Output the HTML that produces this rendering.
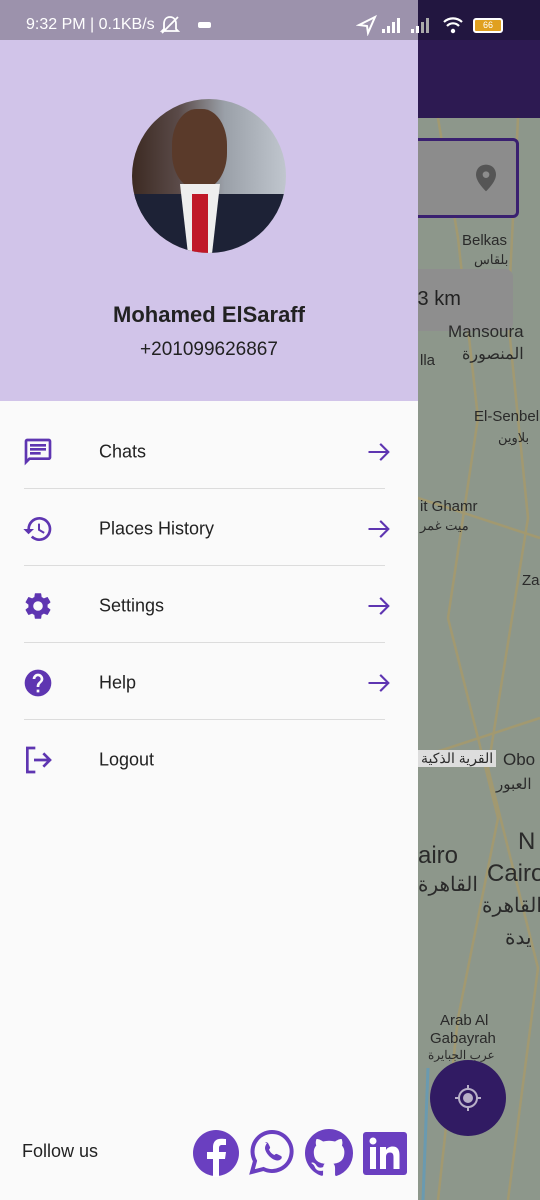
<!DOCTYPE html>
<html><head><meta charset="utf-8"><style>
*{margin:0;padding:0;box-sizing:border-box}
body{width:540px;height:1200px;position:relative;overflow:hidden;font-family:"Liberation Sans","Noto Sans CJK SC",sans-serif;background:#8d978b}
.abs{position:absolute}
.row{position:absolute;left:0;width:418px;height:77px}
.row .t{position:absolute;left:99px;top:50%;transform:translateY(-50%);font-size:18px;color:#222}
.row svg.i{position:absolute;left:22px;top:50%;transform:translateY(-50%)}
.row svg.a{position:absolute;left:365px;top:50%;transform:translateY(-50%)}
.div{position:absolute;left:24px;width:361px;height:1px;background:#dcdcdc}
.mt{position:absolute;color:#2a2a2a;font-size:15px;white-space:nowrap}
</style></head><body>
<div class="abs" style="left:418px;top:0;width:122px;height:118px;background:#2d1a52"></div>
<div class="abs" style="left:418px;top:0;width:122px;height:40px;background:#221640"></div>
<svg class="abs" style="left:418px;top:118px" width="122" height="1082">
<g fill="none" stroke="#a89a6a" stroke-width="2.5" opacity=".8">
<path d="M20 0 L40 120 L60 300 L30 500 L80 700 L40 900 L20 1082"/>
<path d="M100 0 L90 200 L110 400 L70 650 L120 850 L90 1082"/>
<path d="M0 380 L122 420"/><path d="M0 640 L122 600"/>
</g>
<path d="M10 950 L5 1082" stroke="#6a9ab0" stroke-width="3" fill="none"/>
</svg>
<div class="abs" style="left:400px;top:138px;width:119px;height:80px;border:3px solid #3a2070;border-radius:6px;background:#8c8c8c"></div>
<svg class="abs" style="left:476px;top:164px" width="20" height="28" viewBox="0 0 24 32"><path d="M12 0C5 0 0 5 0 12c0 9 12 20 12 20s12-11 12-20C24 5 19 0 12 0z" fill="#555"/><circle cx="12" cy="12" r="4" fill="#8c8c8c"/></svg>
<div class="abs" style="left:400px;top:269px;width:113px;height:62px;border-radius:8px;background:#8e8e8e"></div>
<div class="mt" style="left:412px;top:288px;font-size:20px;color:#222">.3 km</div>
<div class="mt" style="left:462px;top:232px">Belkas</div>
<div class="mt" style="left:474px;top:252px;font-size:13px">بلقاس</div>
<div class="mt" style="left:448px;top:322px;font-size:17px">Mansoura</div>
<div class="mt" style="left:462px;top:344px;font-size:16px">المنصورة</div>
<div class="mt" style="left:420px;top:352px">lla</div>
<div class="mt" style="left:474px;top:408px">El-Senbel</div>
<div class="mt" style="left:498px;top:430px;font-size:13px">بلاوين</div>
<div class="mt" style="left:420px;top:498px">it Ghamr</div>
<div class="mt" style="left:420px;top:518px;font-size:13px">ميت غمر</div>
<div class="mt" style="left:522px;top:572px">Za</div>
<div class="mt" style="left:418px;top:750px;background:#ddd;padding:0 3px;font-size:14px">القرية الذكية</div>
<div class="mt" style="left:503px;top:750px;font-size:17px">Obo</div>
<div class="mt" style="left:496px;top:775px;font-size:15px">العبور</div>
<div class="mt" style="left:418px;top:842px;font-size:24px">airo</div>
<div class="mt" style="left:418px;top:872px;font-size:20px">القاهرة</div>
<div class="mt" style="left:518px;top:828px;font-size:24px">N</div>
<div class="mt" style="left:487px;top:860px;font-size:24px">Cairo</div>
<div class="mt" style="left:482px;top:893px;font-size:20px">القاهرة</div>
<div class="mt" style="left:505px;top:925px;font-size:20px">يدة</div>
<div class="mt" style="left:440px;top:1012px">Arab Al</div>
<div class="mt" style="left:430px;top:1030px">Gabayrah</div>
<div class="mt" style="left:428px;top:1048px;font-size:12px">عرب الجبايرة</div>
<div class="abs" style="left:430px;top:1060px;width:76px;height:76px;border-radius:50%;background:#311b63"></div>
<svg class="abs" style="left:452px;top:1082px" width="32" height="32" viewBox="0 0 32 32"><circle cx="16" cy="16" r="9" fill="none" stroke="#b8b0c8" stroke-width="2"/><circle cx="16" cy="16" r="5" fill="#b8b0c8"/><path d="M16 3v5M16 24v5M3 16h5M24 16h5" stroke="#b8b0c8" stroke-width="2"/></svg>

<div class="abs" style="left:0;top:0;width:418px;height:40px;background:#9c92ac"></div>
<div class="abs" style="left:26px;top:16px;font-size:16px;color:#fff">9:32 PM | 0.1KB/s</div>
<svg class="abs" style="left:160px;top:14px" width="60" height="22" viewBox="0 0 60 22"><path d="M10 3c-4 0-6 3-6 7v5l-2 2h16l-2-2v-5c0-4-2-7-6-7zM2 19L18 3" fill="none" stroke="#fff" stroke-width="1.8"/><rect x="38" y="8" width="13" height="6" rx="2" fill="#fff"/></svg>
<svg class="abs" style="left:356px;top:14px" width="110" height="22" viewBox="0 0 110 22">
<path d="M3 11L19 3 12 19 11 12z" fill="none" stroke="#fff" stroke-width="2"/>
<g fill="#fff"><rect x="26" y="15" width="3" height="4"/><rect x="31" y="12" width="3" height="7"/><rect x="36" y="8" width="3" height="11"/><rect x="41" y="4" width="3" height="15"/></g>
<g fill="#fff"><rect x="55" y="15" width="3" height="4"/><rect x="60" y="12" width="3" height="7"/></g><g fill="#aaa"><rect x="65" y="8" width="3" height="11"/><rect x="70" y="4" width="3" height="15"/></g>
<path d="M88 8a13 13 0 0 1 18 0M91 12a8 8 0 0 1 12 0" fill="none" stroke="#fff" stroke-width="2.2"/><circle cx="97" cy="17" r="2.2" fill="#fff"/></svg>
<div class="abs" style="left:473px;top:18px;width:30px;height:15px;border:2px solid #fff;border-radius:3px;background:#e0a020;font-size:9px;color:#fff;text-align:center;line-height:11px">66</div>
<div class="abs" style="left:0;top:40px;width:418px;height:361px;background:#d1c4e9"></div>
<div class="abs" style="left:132px;top:99px;width:154px;height:154px;border-radius:50%;overflow:hidden;background:linear-gradient(90deg,#3c2a22 0%,#5a4a48 30%,#9aa0a8 60%,#c0c6ce 100%)">
<div class="abs" style="left:0;top:95px;width:154px;height:60px;background:#1d2236"></div>
<div class="abs" style="left:40px;top:10px;width:55px;height:80px;border-radius:45%;background:#5a3a2a"></div>
<div class="abs" style="left:48px;top:85px;width:40px;height:70px;background:#eee;clip-path:polygon(0 0,100% 0,80% 100%,20% 100%)"></div>
<div class="abs" style="left:60px;top:95px;width:16px;height:60px;background:#c01828"></div>
</div>
<div class="abs" style="left:0;width:418px;top:302px;text-align:center;font-size:22px;font-weight:bold;color:#222">Mohamed ElSaraff</div>
<div class="abs" style="left:0;width:418px;top:339px;text-align:center;font-size:19px;color:#222">+201099626867</div>
<div class="abs" style="left:0;top:401px;width:418px;height:799px;background:#fafafa"></div>

<div class="row" style="top:413px"><svg class="i" width="32" height="32" viewBox="0 0 24 24"><path d="M20 2H4c-1.1 0-2 .9-2 2v18l4-4h14c1.1 0 2-.9 2-2V4c0-1.1-.9-2-2-2zm0 14H5.2L4 17.2V4h16v12zM6 12h8v2H6zm0-3h12v2H6zm0-3h12v2H6z" fill="#5e35b1"/></svg><span class="t">Chats</span><svg class="a" width="28" height="28" viewBox="0 0 24 24"><path d="M3 12h17M13 5l7 7-7 7" fill="none" stroke="#5e35b1" stroke-width="1.8"/></svg></div>
<div class="div" style="top:488px"></div>
<div class="row" style="top:490px"><svg class="i" width="32" height="32" viewBox="0 0 24 24"><path d="M13 3a9 9 0 0 0-9 9H1l3.9 3.9L9 12H6a7 7 0 1 1 2.05 4.95l-1.42 1.420A9 9 0 1 0 13 3zm-1 5v5l4.25 2.52.77-1.28-3.520-2.090V8z" fill="#5e35b1"/></svg><span class="t">Places History</span><svg class="a" width="28" height="28" viewBox="0 0 24 24"><path d="M3 12h17M13 5l7 7-7 7" fill="none" stroke="#5e35b1" stroke-width="1.8"/></svg></div>
<div class="div" style="top:565px"></div>
<div class="row" style="top:567px"><svg class="i" width="32" height="32" viewBox="0 0 24 24"><path d="M19.14 12.94c.04-.3.06-.61.06-.94 0-.32-.02-.64-.07-.94l2.030-1.58a.49.49 0 0 0 .12-.61l-1.920-3.32a.49.49 0 0 0-.59-.22l-2.390.96c-.5-.38-1.030-.7-1.620-.94l-.36-2.540a.48.48 0 0 0-.48-.41h-3.840c-.24 0-.43.17-.47.41l-.36 2.540c-.59.24-1.130.57-1.620.94l-2.390-.96a.49.49 0 0 0-.59.22L2.740 8.870c-.12.21-.08.47.12.61l2.030 1.580c-.05.3-.09.63-.09.94s.02.64.07.94l-2.030 1.580a.49.49 0 0 0-.12.61l1.920 3.320c.12.22.37.29.59.22l2.390-.96c.5.38 1.030.7 1.620.94l.36 2.540c.05.24.24.41.48.41h3.840c.24 0 .44-.17.47-.41l.36-2.540c.59-.24 1.130-.56 1.620-.94l2.390.96c.22.08.47 0 .59-.22l1.920-3.320c.12-.22.07-.47-.12-.61l-2.010-1.580zM12 15.6A3.6 3.6 0 1 1 12 8.4a3.6 3.6 0 0 1 0 7.2z" fill="#5e35b1"/></svg><span class="t">Settings</span><svg class="a" width="28" height="28" viewBox="0 0 24 24"><path d="M3 12h17M13 5l7 7-7 7" fill="none" stroke="#5e35b1" stroke-width="1.8"/></svg></div>
<div class="div" style="top:642px"></div>
<div class="row" style="top:644px"><svg class="i" width="32" height="32" viewBox="0 0 24 24"><path d="M12 2a10 10 0 1 0 0 20 10 10 0 0 0 0-20zm1 17h-2v-2h2v2zm2.070-7.750-.9.92C13.450 12.9 13 13.5 13 15h-2v-.5c0-1.1.45-2.1 1.170-2.830l1.240-1.260A2 2 0 1 0 10 9H8a4 4 0 1 1 8 0c0 .88-.36 1.680-.93 2.250z" fill="#5e35b1"/></svg><span class="t">Help</span><svg class="a" width="28" height="28" viewBox="0 0 24 24"><path d="M3 12h17M13 5l7 7-7 7" fill="none" stroke="#5e35b1" stroke-width="1.8"/></svg></div>
<div class="div" style="top:719px"></div>
<div class="row" style="top:721px"><svg class="i" width="32" height="32" viewBox="0 0 24 24"><path d="M10 3H4v18h6M9 12h12M16 7l5 5-5 5" fill="none" stroke="#5e35b1" stroke-width="2"/></svg><span class="t">Logout</span></div>

<div class="abs" style="left:22px;top:1141px;font-size:18px;color:#222">Follow us</div>
<svg class="abs" style="left:192px;top:1129px" width="48" height="48" viewBox="0 0 48 48"><circle cx="24" cy="24" r="23" fill="#6a3fc0"/><path d="M27 48V30h6l1-7h-7v-4c0-2 1-3 3-3h4v-6c-1 0-3-.3-5-.3-5 0-8 3-8 8.5V23h-6v7h6v18z" fill="#fff"/></svg>
<svg class="abs" style="left:249px;top:1129px" width="46" height="46" viewBox="0 0 46 46"><path d="M23 3a19.5 19.5 0 0 0-17 29L3 43l11.5-3A19.5 19.5 0 1 0 23 3z" fill="none" stroke="#6a3fc0" stroke-width="4"/><path d="M16 14c1-1 2-1 3 0l2 4c.3 1 0 1.5-1 2.5 1 2.5 3 4.5 5.5 5.5 1-1 1.5-1.3 2.5-1l4 2c1 .6 1 2 0 3-1.5 1.5-3.5 2-6 1-4-1.5-8-5.5-9.5-9.5-1-2.5-.5-4.5 1.5-7.5z" fill="#6a3fc0"/></svg>
<svg class="abs" style="left:305px;top:1129px" width="48" height="48" viewBox="0 0 16 16"><path fill="#6a3fc0" d="M8 0C3.58 0 0 3.58 0 8c0 3.54 2.29 6.53 5.47 7.59.4.07.55-.17.55-.38v-1.33c-2.23.49-2.69-1.07-2.69-1.07-.36-.92-.89-1.17-.89-1.17-.73-.5.05-.49.05-.49.8.06 1.23.83 1.23.83.72 1.23 1.88.87 2.34.67.07-.52.28-.87.51-1.07-1.78-.2-3.64-.89-3.64-3.95 0-.87.31-1.59.82-2.15-.08-.2-.36-1.02.08-2.12 0 0 .67-.21 2.2.82a7.6 7.6 0 0 1 4 0c1.53-1.04 2.2-.82 2.2-.82.44 1.1.16 1.92.08 2.12.51.56.82 1.27.82 2.15 0 3.07-1.87 3.75-3.65 3.95.29.25.54.73.54 1.48v2.2c0 .21.15.46.55.38A8 8 0 0 0 16 8c0-4.42-3.58-8-8-8z"/></svg>
<svg class="abs" style="left:363px;top:1132px" width="44" height="43" viewBox="0 0 44 43"><rect width="44" height="43" rx="3" fill="#6a3fc0"/><circle cx="10" cy="9" r="3.5" fill="#fff"/><rect x="7" y="15" width="6" height="22" fill="#fff"/><path d="M17 15h6v3c1.5-2.5 4-3.5 6.5-3.5 5 0 7 3 7 8.5V37h-6V25c0-3-1-4.5-3.5-4.5S23 22 23 25v12h-6z" fill="#fff"/></svg>
</body></html>
